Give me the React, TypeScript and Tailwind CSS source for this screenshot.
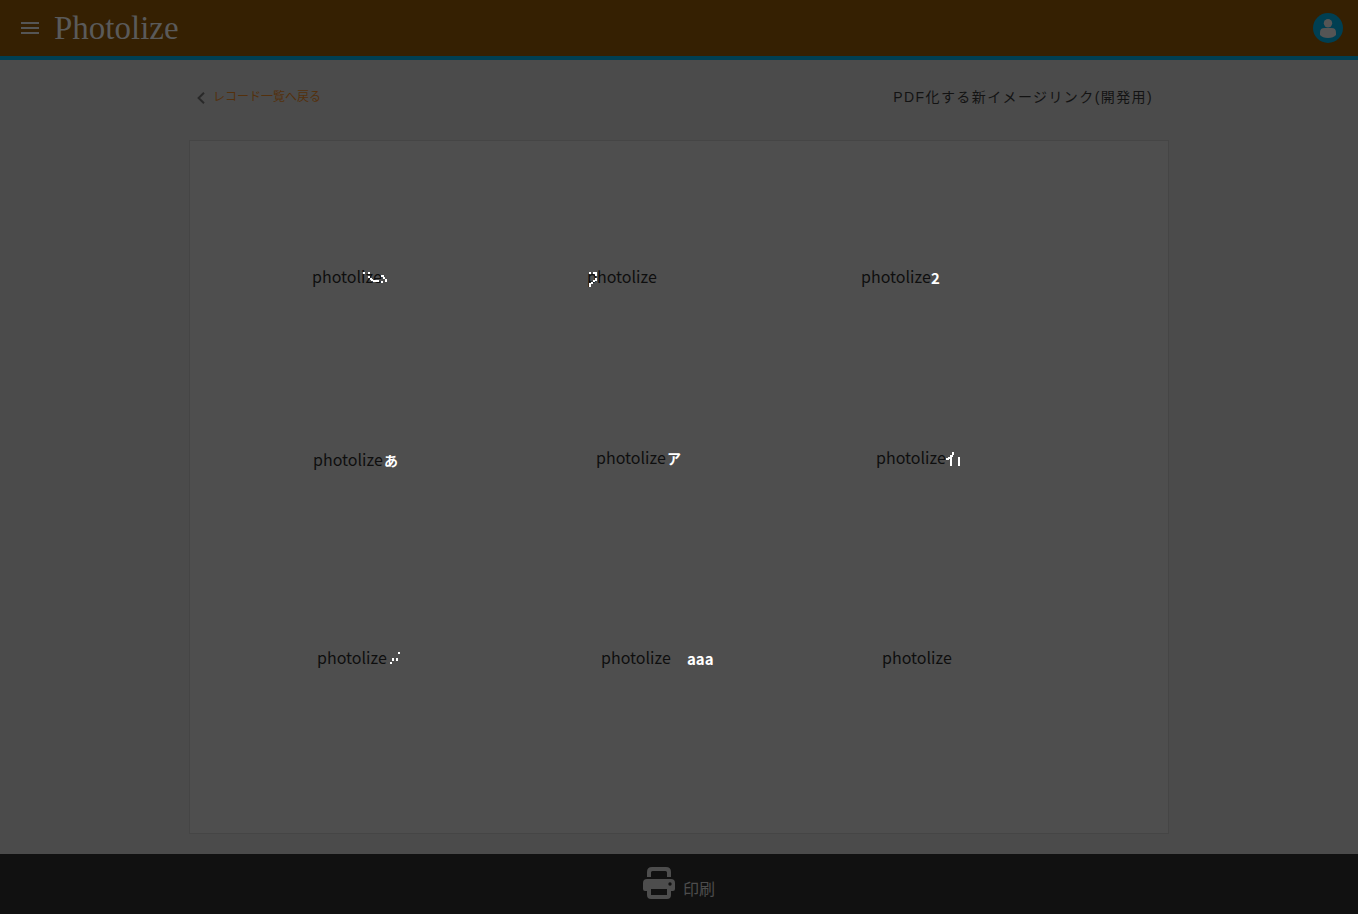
import React from "react";

type Mark = {
  x: string;
  y: string;
  extra?: React.ReactNode;
};

// White annotation strokes, drawn on a two pixel raster.
function Dots({ d, className }: { d: string; className: string }) {
  return (
    <svg
      aria-hidden="true"
      viewBox="0 0 28 16"
      shapeRendering="crispEdges"
      className={"absolute z-10 h-4 w-7 fill-white " + className}
    >
      <path d={d} />
    </svg>
  );
}

const noteText =
  "absolute font-['Noto_Sans_CJK_JP','Noto_Sans',sans-serif] font-bold text-white leading-4 whitespace-pre ";

const marks: Mark[] = [
  {
    x: "left-[122px]",
    y: "top-[126px]",
    extra: (
      <Dots
        className="left-[51px] top-[4px]"
        d="M0 1h2v2h-2zM5 1h2v2h-2zM5 5h2v2h-2zM7 7h2v2h-2zM10 9h4v2h-4zM8 8h2v2h-2zM14 9h2v2h-2zM18 4h3v2h-3zM20 6h2v2h-2zM22 8h2v3h-2zM18 10h2v2h-2z"
      />
    ),
  },
  {
    x: "left-[397px]",
    y: "top-[126px]",
    extra: (
      <Dots
        className="left-[2px] top-[4px]"
        d="M0 1h2v2h-2zM4 1h4v2h-4zM6 3h2v2h-2zM6 7h2v3h-2zM4 9h2v2h-2zM0 12h2v4h-2zM2 11h2v2h-2z"
      />
    ),
  },
  {
    x: "left-[671px]",
    y: "top-[126px]",
    extra: <span className={noteText + "left-[70px] top-[3px] text-[15px]"}>2</span>,
  },
  {
    x: "left-[123px]",
    y: "top-[309px]",
    extra: <span className={noteText + "left-[71px] top-[2px] text-[14px]"}>あ</span>,
  },
  {
    x: "left-[406px]",
    y: "top-[307px]",
    extra: <span className={noteText + "left-[71px] top-[2px] text-[14px]"}>ア</span>,
  },
  {
    x: "left-[686px]",
    y: "top-[307px]",
    extra: (
      <Dots
        className="left-[70px] top-[3px]"
        d="M6 1h2v3h-2zM4 4h3v2h-3zM2 6h3v2h-3zM0 7h3v2h-3zM4 6h2v9h-2zM12 6h2v9h-2z"
      />
    ),
  },
  {
    x: "left-[127px]",
    y: "top-[507px]",
    extra: (
      <Dots
        className="left-[73px] top-[3px]"
        d="M8 1h2v2h-2zM2 7h2v3h-2zM6 7h2v3h-2zM0 11h2v2h-2z"
      />
    ),
  },
  {
    x: "left-[411px]",
    y: "top-[507px]",
    extra: <span className={noteText + "left-[86px] top-[3px] text-[15px]"}>aaa</span>,
  },
  { x: "left-[692px]", y: "top-[507px]" },
];

export default function App() {
  return (
    <div className="flex min-h-screen flex-col bg-[#4b4b4b] font-['Liberation_Sans','Noto_Sans_CJK_JP',sans-serif]">
      <header className="flex h-[60px] items-center border-b-4 border-[#003f52] bg-[#352002] pl-[21px] pr-[15px]">
        <button type="button" aria-label="メニュー" className="flex h-3 w-[18px] flex-col justify-between">
          <span className="h-0.5 w-full bg-[#555]" />
          <span className="h-0.5 w-full bg-[#555]" />
          <span className="h-0.5 w-full bg-[#555]" />
        </button>
        <a
          href="#"
          className="ml-[15px] font-['Liberation_Serif',serif] text-[33px] leading-10 text-[#5a5a5a]"
        >
          Photolize
        </a>
        <button type="button" aria-label="アカウント" className="ml-auto size-[30px]">
          <svg viewBox="0 0 30 30" className="size-full">
            <circle cx="15" cy="15" r="15" fill="#003f52" />
            <circle cx="15" cy="10.3" r="4.2" fill="#555" />
            <path d="M7 22v-2.6Q7 15 11.5 15h7Q23 15 23 19.400V22q-2.500 3-8 3t-8-3z" fill="#555" />
          </svg>
        </button>
      </header>

      <main className="mx-auto flex w-full max-w-[980px] flex-1 flex-col pb-5">
        <div className="flex h-20 items-start justify-between pl-2 pr-4 pt-[27px]">
          <a href="#" className="flex items-center text-[12px] leading-5 text-[#54300c]">
            <svg viewBox="0 0 8 12" className="mr-2 mt-0.5 h-3 w-2" fill="none" stroke="#292929" strokeWidth="2">
              <path d="M7 .8 1.600 6 7 11.200" />
            </svg>
            レコード一覧へ戻る
          </a>
          <h1 className="text-[14px] leading-5 tracking-widest text-[#131313]">
            PDF化する新イメージリンク(開発用)
          </h1>
        </div>

        <section className="relative min-h-[600px] flex-1 border border-[#454545] bg-[#4e4e4e]">
          {marks.map((m, i) => (
            <div key={i} className={"absolute " + m.x + " " + m.y}>
              {m.extra}
              <span className="relative block font-['Noto_Sans_CJK_JP',sans-serif] text-[16px] leading-[18px] text-[#0e0e0e]">
                photolize
              </span>
            </div>
          ))}
        </section>
      </main>

      <footer className="flex h-[60px] justify-center bg-[#111]">
        <button type="button" className="flex items-center gap-2 text-[16px] leading-6 text-[#4d4d4d]">
          <svg viewBox="0 0 32 32" className="mb-0.5 size-8">
            <path
              d="M4 10V5q0-5 5-5h14q5 0 5 5v5h-4V5.500Q24 4 22.500 4h-13Q8 4 8 5.500V10z"
              fill="#4d4d4d"
            />
            <path
              fillRule="evenodd"
              d="M4 12h24q4 0 4 4v6q0 2-2 2h-2v4q0 4-4 4H8q-4 0-4-4v-4H2q-2 0-2-2v-6q0-4 4-4zM8 22v6h16v-6z"
              fill="#4d4d4d"
            />
            <circle cx="27" cy="17" r="1.700" fill="#111" />
          </svg>
          <span className="pt-3">印刷</span>
        </button>
      </footer>
    </div>
  );
}
